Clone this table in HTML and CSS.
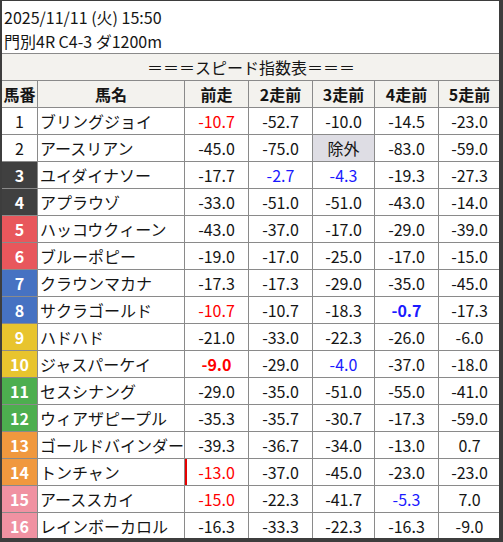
FILE: index.html
```html
<!DOCTYPE html>
<html lang="ja">
<head>
<meta charset="utf-8">
<link rel="stylesheet" href="styles.css">
</head>
<body>
<div class="frame">
  <div class="info">
    <div class="line">2025/11/11 (火) 15:50</div>
    <div class="line">門別4R C4-3 ダ1200m</div>
  </div>
  <div class="grid">
    <div class="title">＝＝＝スピード指数表＝＝＝</div>
    <div class="hd">馬番</div><div class="hd">馬名</div><div class="hd">前走</div><div class="hd">2走前</div><div class="hd">3走前</div><div class="hd">4走前</div><div class="hd">5走前</div>

    <div class="no w">1</div><div class="nm">ブリングジョイ</div><div class="v red">-10.7</div><div class="v">-52.7</div><div class="v">-10.0</div><div class="v">-14.5</div><div class="v">-23.0</div>
    <div class="no w">2</div><div class="nm">アースリアン</div><div class="v">-45.0</div><div class="v">-75.0</div><div class="v ex">除外</div><div class="v">-83.0</div><div class="v">-59.0</div>
    <div class="no k">3</div><div class="nm">ユイダイナソー</div><div class="v">-17.7</div><div class="v blue">-2.7</div><div class="v blue">-4.3</div><div class="v">-19.3</div><div class="v">-27.3</div>
    <div class="no k">4</div><div class="nm">アプラウゾ</div><div class="v">-33.0</div><div class="v">-51.0</div><div class="v">-51.0</div><div class="v">-43.0</div><div class="v">-14.0</div>
    <div class="no r">5</div><div class="nm">ハッコウクィーン</div><div class="v">-43.0</div><div class="v">-37.0</div><div class="v">-17.0</div><div class="v">-29.0</div><div class="v">-39.0</div>
    <div class="no r">6</div><div class="nm">ブルーポピー</div><div class="v">-19.0</div><div class="v">-17.0</div><div class="v">-25.0</div><div class="v">-17.0</div><div class="v">-15.0</div>
    <div class="no b">7</div><div class="nm">クラウンマカナ</div><div class="v">-17.3</div><div class="v">-17.3</div><div class="v">-29.0</div><div class="v">-35.0</div><div class="v">-45.0</div>
    <div class="no b">8</div><div class="nm">サクラゴールド</div><div class="v red">-10.7</div><div class="v">-10.7</div><div class="v">-18.3</div><div class="v blue strong">-0.7</div><div class="v">-17.3</div>
    <div class="no y">9</div><div class="nm">ハドハド</div><div class="v">-21.0</div><div class="v">-33.0</div><div class="v">-22.3</div><div class="v">-26.0</div><div class="v">-6.0</div>
    <div class="no y">10</div><div class="nm">ジャスパーケイ</div><div class="v red strong">-9.0</div><div class="v">-29.0</div><div class="v blue">-4.0</div><div class="v">-37.0</div><div class="v">-18.0</div>
    <div class="no g">11</div><div class="nm">セスシナング</div><div class="v">-29.0</div><div class="v">-35.0</div><div class="v">-51.0</div><div class="v">-55.0</div><div class="v">-41.0</div>
    <div class="no g">12</div><div class="nm">ウィアザピープル</div><div class="v">-35.3</div><div class="v">-35.7</div><div class="v">-30.7</div><div class="v">-17.3</div><div class="v">-59.0</div>
    <div class="no o">13</div><div class="nm">ゴールドバインダー</div><div class="v">-39.3</div><div class="v">-36.7</div><div class="v">-34.0</div><div class="v">-13.0</div><div class="v">0.7</div>
    <div class="no o">14</div><div class="nm">トンチャン</div><div class="v red mark">-13.0</div><div class="v">-37.0</div><div class="v">-45.0</div><div class="v">-23.0</div><div class="v">-23.0</div>
    <div class="no p">15</div><div class="nm">アーススカイ</div><div class="v red">-15.0</div><div class="v">-22.3</div><div class="v">-41.7</div><div class="v blue">-5.3</div><div class="v">7.0</div>
    <div class="no p">16</div><div class="nm">レインボーカロル</div><div class="v">-16.3</div><div class="v">-33.3</div><div class="v">-22.3</div><div class="v">-16.3</div><div class="v">-9.0</div>
  </div>
</div>
</body>
</html>
```
FILE: styles.css
```css
html, body {
  margin: 0;
  padding: 0;
  background: #fff;
}
body {
  font-family: "Noto Sans CJK JP", "Noto Sans", sans-serif;
  font-size: 16px;
  color: #151515;
}
.frame {
  box-sizing: border-box;
  width: 503px;
  height: 542px;
  border-style: solid;
  border-color: #3d3d3d;
  border-width: 1px 4px 4px 2px;
  overflow: hidden;
  background: #fff;
}
.info {
  height: 53px;
  box-sizing: border-box;
  padding: 4px 0 0 2px;
  border-bottom: 1px solid #8a8a8a;
}
.line {
  height: 24px;
  line-height: 24px;
}
.grid {
  display: grid;
  grid-template-columns: 35px 146px 63px 63px 61px 63px 61px;
  grid-auto-rows: 26px;
  gap: 1px;
  background: #8a8a8a;
}
.grid > div {
  display: flex;
  align-items: center;
  background: #fff;
  line-height: 26px;
}
.title {
  grid-column: 1 / -1;
  justify-content: center;
  background: #f3f2ee !important;
}
.hd {
  justify-content: center;
  font-weight: 700;
  background: #f3f2ee !important;
}
.no {
  justify-content: center;
  font-weight: 700;
  color: #fff;
}
.no.w { background: #fff; color: #151515; font-weight: 400; }
.no.k { background: #404040 !important; }
.no.r { background: #e8575c !important; }
.no.b { background: #4672c2 !important; }
.no.y { background: #e8c42e !important; }
.no.g { background: #4dae4f !important; }
.no.o { background: #f0983e !important; }
.no.p { background: #f092a2 !important; }
.nm {
  padding-left: 2px;
  white-space: nowrap;
}
.v {
  justify-content: center;
}
.red { color: #ff0000; }
.blue { color: #1a1aff; }
.strong { font-weight: 700; }
.ex { background: #dedde4 !important; }
.mark { box-shadow: inset 2px 0 0 #e60000; }
```
